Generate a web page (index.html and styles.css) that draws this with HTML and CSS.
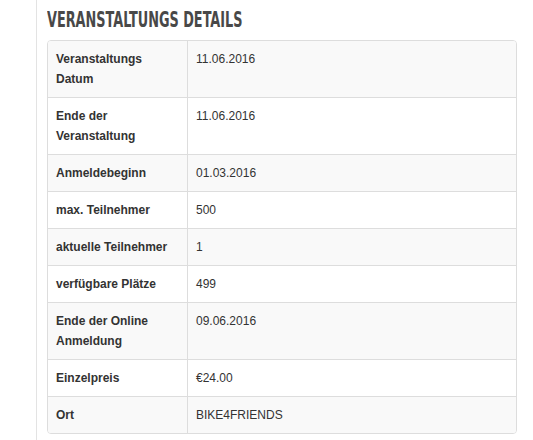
FILE: index.html
```html
<!DOCTYPE html>
<html>
<head>
<meta charset="utf-8">
<link rel="stylesheet" href="styles.css">
</head>
<body>
<div class="content">
  <h2 class="title"><span class="title-text">VERANSTALTUNGS DETAILS</span></h2>
  <div class="panel">
    <table class="details">
      <tr><th>Veranstaltungs Datum</th><td>11.06.2016</td></tr>
      <tr><th>Ende der Veranstaltung</th><td>11.06.2016</td></tr>
      <tr><th>Anmeldebeginn</th><td>01.03.2016</td></tr>
      <tr><th>max. Teilnehmer</th><td>500</td></tr>
      <tr><th>aktuelle Teilnehmer</th><td>1</td></tr>
      <tr><th>verfügbare Plätze</th><td>499</td></tr>
      <tr><th>Ende der Online Anmeldung</th><td>09.06.2016</td></tr>
      <tr><th>Einzelpreis</th><td>€24.00</td></tr>
      <tr><th>Ort</th><td>BIKE4FRIENDS</td></tr>
    </table>
  </div>
</div>
</body>
</html>
```

FILE: styles.css
```css
html, body {
  margin: 0;
  padding: 0;
  background: #fff;
}
.content {
  margin-left: 36px;
  border-left: 1px solid #e3e3e3;
  padding: 10px 0 0 10px;
  min-height: 440px;
  box-sizing: border-box;
  width: 481px;
}
.title {
  margin: 0 0 9px 0;
  font-family: "DejaVu Sans Condensed", "Liberation Sans", sans-serif;
  font-weight: bold;
  font-size: 21px;
  line-height: 21px;
  color: #484848;
  white-space: nowrap;
}
.title-text {
  display: inline-block;
  transform: scaleX(0.68);
  transform-origin: left center;
}
.panel {
  width: 470px;
  box-sizing: border-box;
  border: 1px solid #ddd;
  border-radius: 4px;
  overflow: hidden;
}
.details {
  width: 100%;
  border-collapse: collapse;
  font-family: "Liberation Sans", Arial, sans-serif;
  font-size: 12px;
  line-height: 20px;
  color: #333;
}
.details th, .details td {
  padding: 8px;
  text-align: left;
  vertical-align: top;
  border-top: 1px solid #ddd;
}
.details tr:first-child th, .details tr:first-child td {
  border-top: none;
}
.details th {
  width: 123px;
  font-weight: bold;
  border-right: 1px solid #ddd;
}
.details tr:nth-child(odd) {
  background: #f9f9f9;
}
```
